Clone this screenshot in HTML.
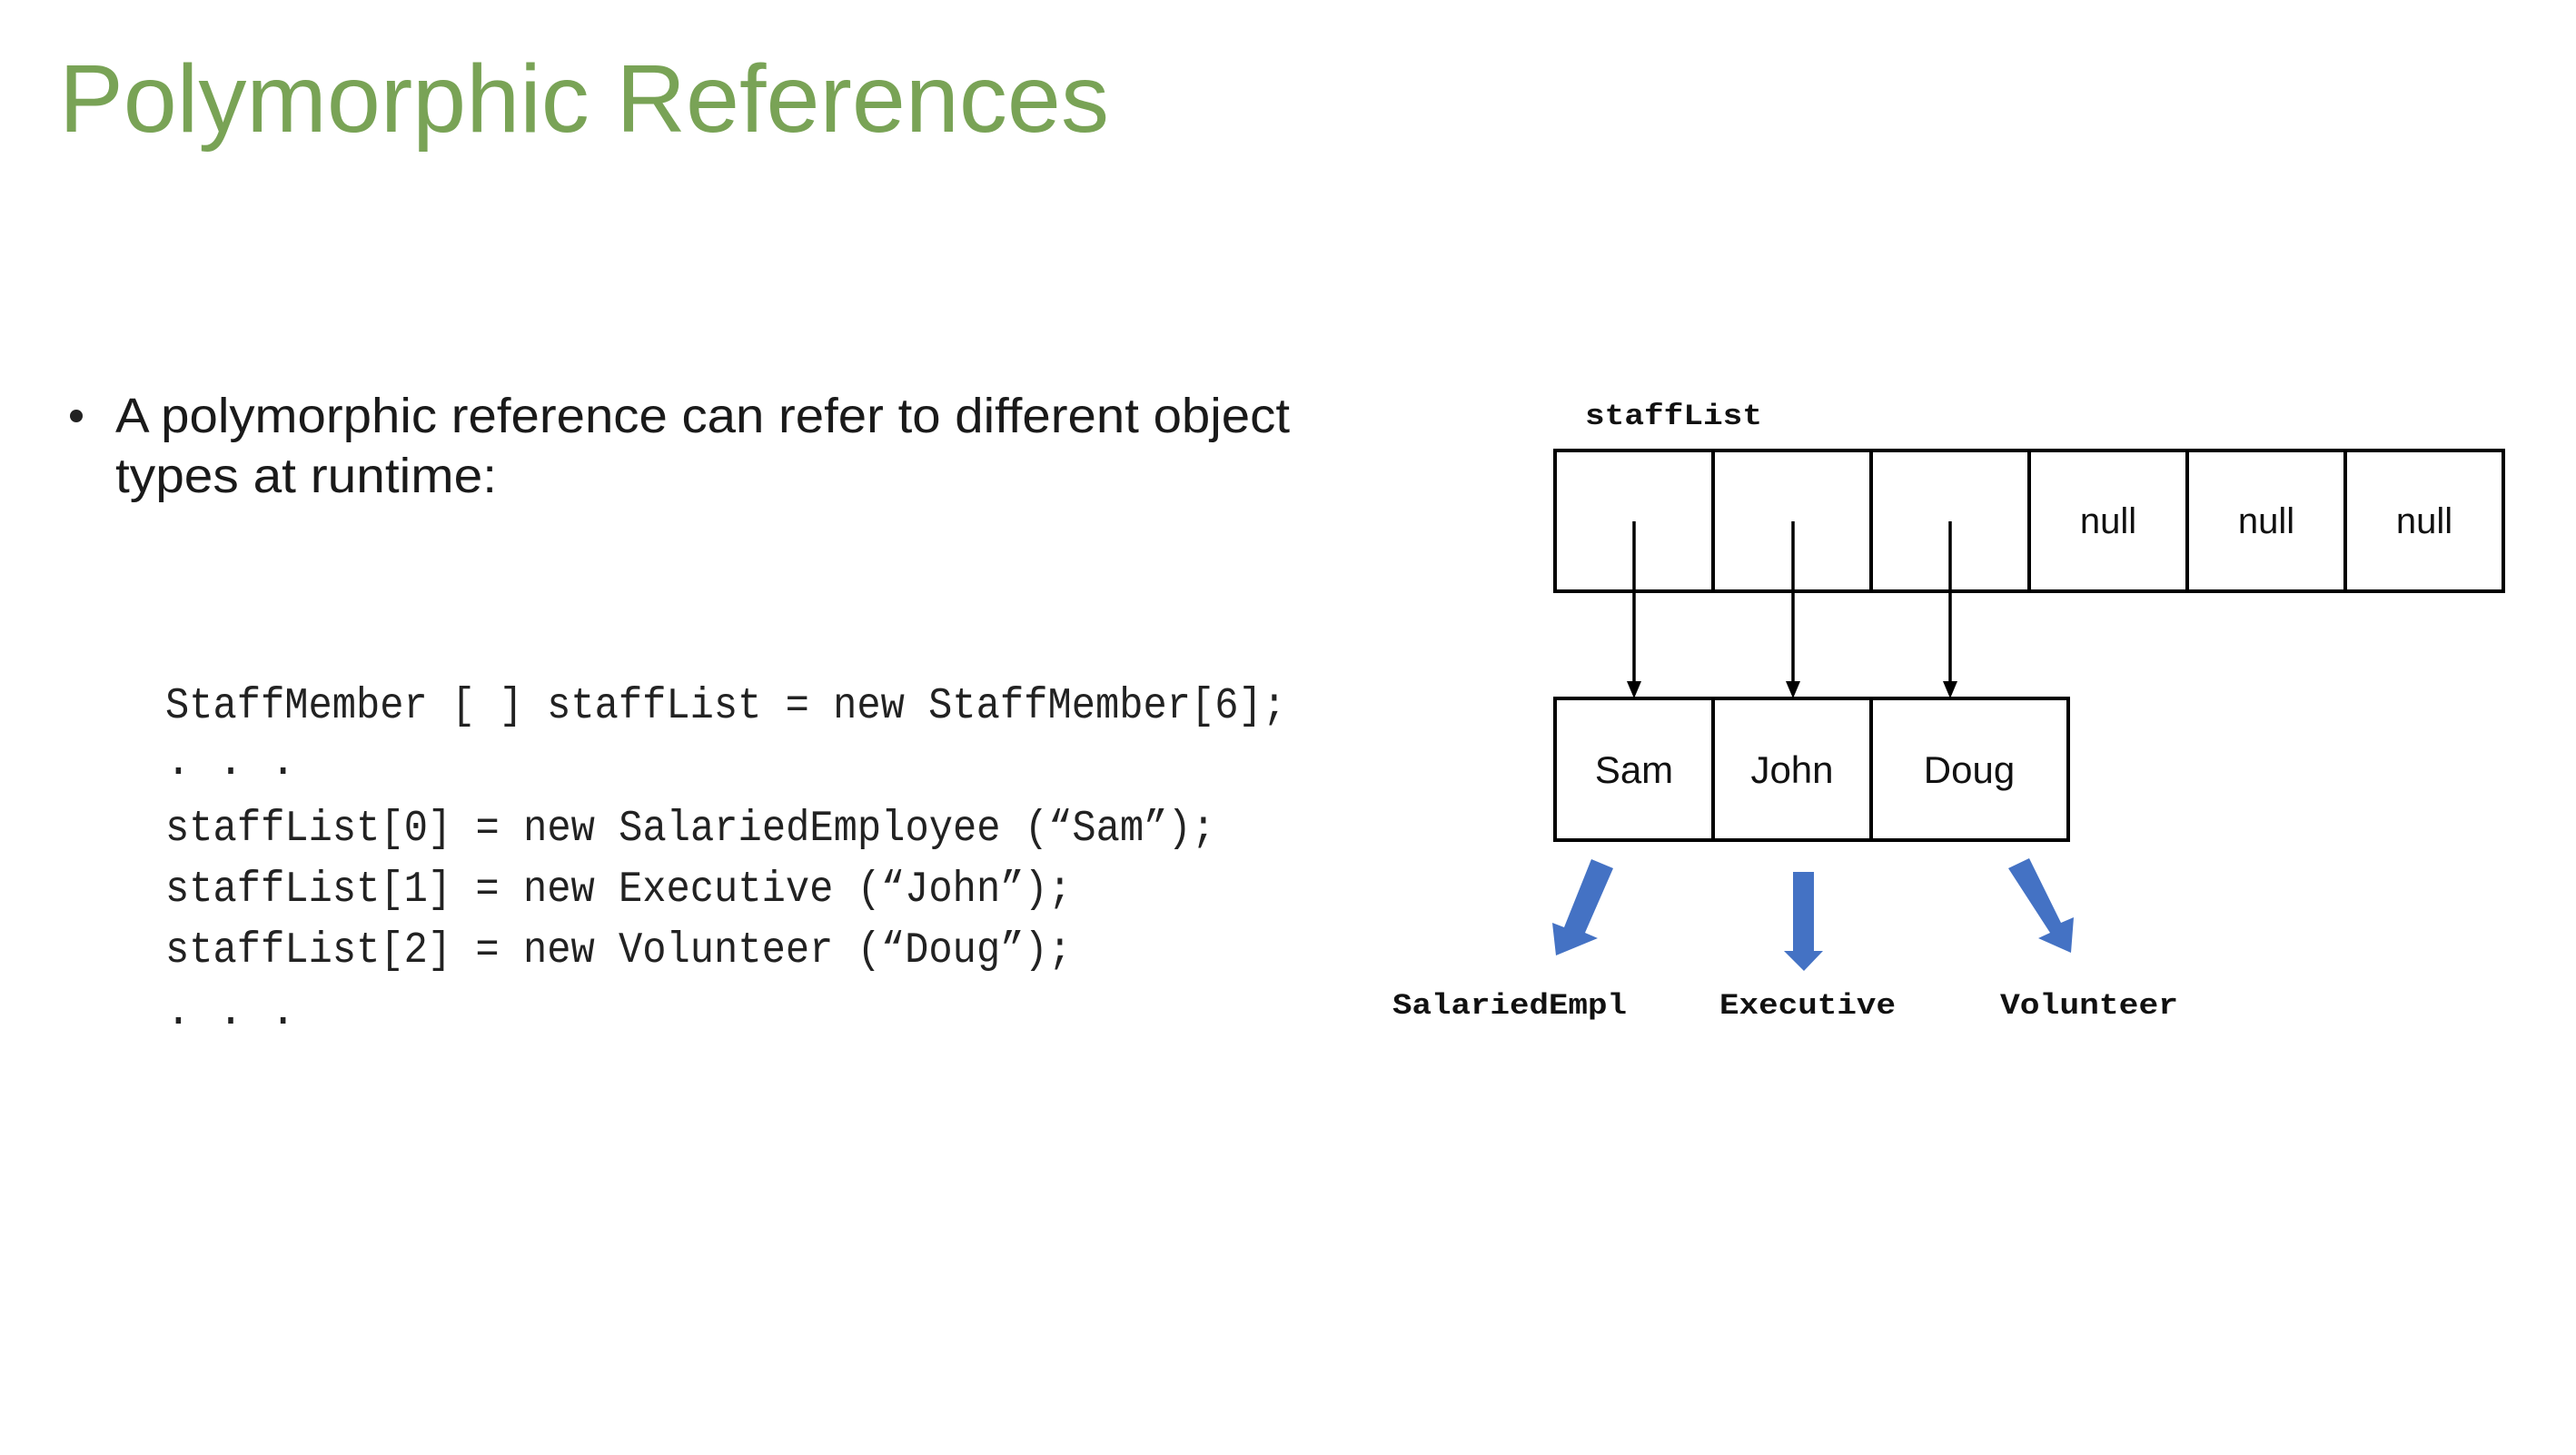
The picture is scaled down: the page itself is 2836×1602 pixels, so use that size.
<!DOCTYPE html>
<html><head><meta charset="utf-8"><style>
html,body{margin:0;padding:0;background:#fff;}
svg{display:block}
</style></head><body>
<svg width="2836" height="1602" viewBox="0 0 2836 1602" xmlns="http://www.w3.org/2000/svg">
<rect width="2836" height="1602" fill="#fff"/>
<text x="65" y="145" font-family="Liberation Sans, sans-serif" font-size="106" fill="#79a356" textLength="1156" lengthAdjust="spacingAndGlyphs">Polymorphic References</text>
<circle cx="84" cy="458" r="7" fill="#222"/>
<g font-family="Liberation Sans, sans-serif" font-size="54" fill="#1a1a1a">
<text x="127" y="476" textLength="1293" lengthAdjust="spacingAndGlyphs">A polymorphic reference can refer to different object</text>
<text x="127" y="542" textLength="420" lengthAdjust="spacingAndGlyphs">types at runtime:</text>
</g>
<g font-family="Liberation Mono, monospace" font-size="48" fill="#222">
<text x="182" y="790" textLength="1234" lengthAdjust="spacingAndGlyphs">StaffMember [ ] staffList = new StaffMember[6];</text>
<text x="182" y="852">. . .</text>
<text x="182" y="925" textLength="1156" lengthAdjust="spacingAndGlyphs">staffList[0] = new SalariedEmployee (“Sam”);</text>
<text x="182" y="992" textLength="998" lengthAdjust="spacingAndGlyphs">staffList[1] = new Executive (“John”);</text>
<text x="182" y="1059" textLength="998" lengthAdjust="spacingAndGlyphs">staffList[2] = new Volunteer (“Doug”);</text>
<text x="182" y="1127">. . .</text>
</g>
<text x="1745" y="467" font-family="Liberation Mono, monospace" font-weight="bold" font-size="32" fill="#111" textLength="195" lengthAdjust="spacingAndGlyphs">staffList</text>
<g fill="none" stroke="#000" stroke-width="4">
<rect x="1712" y="496" width="1044" height="155"/>
<line x1="1886" y1="496" x2="1886" y2="651"/>
<line x1="2060" y1="496" x2="2060" y2="651"/>
<line x1="2234" y1="496" x2="2234" y2="651"/>
<line x1="2408" y1="496" x2="2408" y2="651"/>
<line x1="2582" y1="496" x2="2582" y2="651"/>
<rect x="1712" y="769" width="565" height="156"/>
<line x1="1886" y1="769" x2="1886" y2="925"/>
<line x1="2060" y1="769" x2="2060" y2="925"/>
<line x1="1799" y1="574" x2="1799" y2="752" stroke-width="3.5"/>
<line x1="1974" y1="574" x2="1974" y2="752" stroke-width="3.5"/>
<line x1="2147" y1="574" x2="2147" y2="752" stroke-width="3.5"/>
</g>
<g fill="#000">
<polygon points="1791,750 1807,750 1799,769"/>
<polygon points="1966,750 1982,750 1974,769"/>
<polygon points="2139,750 2155,750 2147,769"/>
</g>
<g font-family="Liberation Sans, sans-serif" font-size="40" fill="#111" text-anchor="middle">
<text x="2321" y="587">null</text>
<text x="2495" y="587">null</text>
<text x="2669" y="587">null</text>
<text x="1799" y="862" font-size="42">Sam</text>
<text x="1973" y="862" font-size="42">John</text>
<text x="2168" y="862" font-size="42">Doug</text>
</g>
<g fill="#4472c4">
<polygon points="1974,960 1997,960 1997,1047 2007,1047 1986,1069 1964,1047 1974,1047"/>
<polygon points="1752,946 1776,956 1745,1027 1759,1033 1713,1052 1709,1016 1722,1021"/>
<polygon points="2211,956 2234,945 2269,1016 2283,1010 2280,1049 2244,1033 2257,1027"/>
</g>
<g font-family="Liberation Mono, monospace" font-weight="bold" font-size="32" fill="#111">
<text x="1533" y="1116" textLength="258" lengthAdjust="spacingAndGlyphs">SalariedEmpl</text>
<text x="1893" y="1116" textLength="194" lengthAdjust="spacingAndGlyphs">Executive</text>
<text x="2202" y="1116" textLength="196" lengthAdjust="spacingAndGlyphs">Volunteer</text>
</g>
</svg>
</body></html>
